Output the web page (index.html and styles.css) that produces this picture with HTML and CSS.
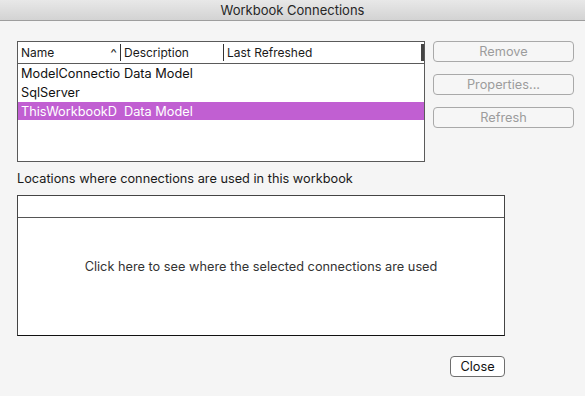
FILE: index.html
```html
<!DOCTYPE html>
<html lang="en">

<head>
    <meta charset="UTF-8">
    <meta name="viewport" content="width=device-width, initial-scale=1.0">
    <title>Workbook Connections</title>
    <link rel="stylesheet" href="styles.css">
</head>

<body>
    <div class="window">
        <div class="title-bar">Workbook Connections</div>

        <div class="content">
            <div class="top-row">
                <div class="conn-list">
                    <div class="list-header">
                        <div class="col col-name">Name <span class="sort-arrow">^</span></div>
                        <div class="col col-desc">Description</div>
                        <div class="col col-refresh">Last Refreshed</div>
                    </div>
                    <div class="list-row">
                        <div class="cell cell-name">ModelConnectio</div>
                        <div class="cell cell-desc">Data Model</div>
                    </div>
                    <div class="list-row">
                        <div class="cell cell-name">SqlServer</div>
                        <div class="cell cell-desc"></div>
                    </div>
                    <div class="list-row selected">
                        <div class="cell cell-name">ThisWorkbookD</div>
                        <div class="cell cell-desc">Data Model</div>
                    </div>
                </div>

                <div class="side-buttons">
                    <button class="side-button" disabled>Remove</button>
                    <button class="side-button" disabled>Properties...</button>
                    <button class="side-button" disabled>Refresh</button>
                </div>
            </div>

            <div class="locations-label">Locations where connections are used in this workbook</div>

            <div class="locations-box">
                <div class="locations-header"></div>
                <div class="locations-body">Click here to see where the selected connections are used</div>
            </div>

            <div class="footer">
                <button class="close-button">Close</button>
            </div>
        </div>
    </div>
</body>

</html>
```

FILE: styles.css
```css
body {
    font-family: Inter, "Liberation Sans", Arial, sans-serif;
    background-color: #f5f5f5;
    margin: 0;
    padding: 0;
    color: #1a1a1a;
}

.window {
    width: 585px;
    height: 396px;
    overflow: hidden;
}

.title-bar {
    height: 20px;
    line-height: 21px;
    text-align: center;
    font-size: 13px;
    color: #262626;
    background: linear-gradient(#e8e8e8, #d3d3d3);
    border-bottom: 1px solid #9e9e9e;
}

.content {
    padding: 20px 11px 0 17px;
}

.top-row {
    display: flex;
    align-items: flex-start;
}

.conn-list {
    width: 406px;
    height: 119px;
    border: 1px solid #5a5a5a;
    background-color: #fff;
}

.list-header {
    display: flex;
    height: 21px;
    border-bottom: 1px solid #5a5a5a;
    font-size: 12px;
}

.col {
    padding-left: 3px;
    box-sizing: border-box;
    margin: 2px 0;
    line-height: 17px;
}

.col-name {
    width: 103px;
    border-right: 1px solid #333;
    position: relative;
}

.sort-arrow {
    position: absolute;
    right: 4px;
    top: 1px;
    font-size: 11px;
    transform: scaleX(1.3);
}

.col-desc {
    width: 103px;
    border-right: 1px solid #333;
}

.col-refresh {
    flex: 1;
    border-right: 3px solid #444;
}

.list-row {
    display: flex;
    height: 18px;
    line-height: 19px;
    margin-bottom: 1px;
    font-size: 12.75px;
    color: #111;
}

.list-row.selected {
    background-color: #c15fd2;
    color: #fff;
}

.cell {
    white-space: nowrap;
    padding-left: 3px;
    box-sizing: border-box;
}

.cell-name {
    width: 103px;
}

.locations-label,
.locations-body,
.side-button,
.close-button {
    font-family: Inter, "Liberation Sans", Arial, sans-serif;
    font-size: 12.75px;
}

.side-buttons {
    display: flex;
    flex-direction: column;
    gap: 12px;
    margin-left: 8px;
}

.side-button {
    width: 141px;
    height: 21px;
    border: 1px solid #a9a9a9;
    border-radius: 4px;
    background-color: #f6f6f6;
    color: #9c9c9c;
    padding: 0;
}

.locations-label {
    margin-top: 9px;
    height: 16px;
    line-height: 16px;
    color: #1a1a1a;
}

.locations-box {
    width: 486px;
    height: 139px;
    margin-top: 8px;
    border: 1px solid #444;
    border-bottom-color: #111;
    background-color: #fff;
    display: flex;
    flex-direction: column;
}

.locations-header {
    height: 21px;
    border-bottom: 1px solid #555;
}

.locations-body {
    flex: 1;
    display: flex;
    align-items: center;
    justify-content: center;
    color: #333;
    padding-bottom: 20px;
}

.footer {
    width: 488px;
    display: flex;
    justify-content: flex-end;
    margin-top: 20px;
}

.close-button {
    width: 55px;
    height: 21px;
    border: 1px solid #6e6e6e;
    border-radius: 4px;
    background-color: #fff;
    color: #111;
    padding: 0;
}
```
